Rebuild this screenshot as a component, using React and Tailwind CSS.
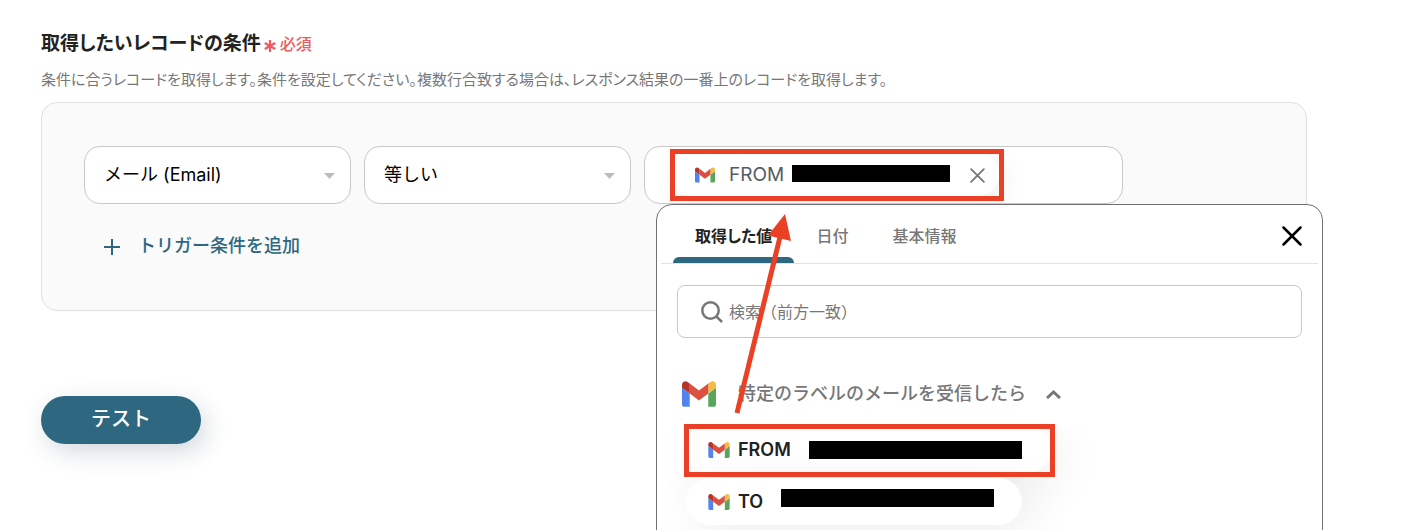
import React, { useState } from 'react'

const fields = ['メール (Email)', '名前 (Name)', '電話番号 (Tel)']
const operators = ['等しい', '等しくない', '含む']
const tabs = ['取得した値', '日付', '基本情報']

function GmailLogo({ className }) {
  return (
    <svg className={className} viewBox="52 42 88 66" aria-hidden="true">
      <path fill="#5383ec" d="M58 108h14V74L52 59v43c0 3.32 2.69 6 6 6" />
      <path fill="#58a65c" d="M120 108h14c3.32 0 6-2.69 6-6V59l-20 15" />
      <path fill="#f2bd42" d="M120 48v26l20-15v-8c0-7.42-8.47-11.65-14.4-7.2" />
      <path fill="#d95140" d="M72 74V48l24 18 24-18v26L96 92" />
      <path fill="#b63327" d="M52 51v8l20 15V48l-5.6-4.2c-5.94-4.45-14.4-.22-14.4 7.2" />
    </svg>
  )
}

function Cross({ className, width }) {
  return (
    <svg className={className} viewBox="0 0 20 20" fill="none" stroke="currentColor" strokeWidth={width} strokeLinecap="round" aria-hidden="true">
      <path d="M1.5 1.5l17 17M18.5 1.5l-17 17" />
    </svg>
  )
}

function Dropdown({ label, options }) {
  const [value, setValue] = useState(options[0])
  return (
    <div className="relative w-[267px] shrink-0">
      <select
        aria-label={label}
        value={value}
        onChange={e => setValue(e.target.value)}
        className="h-[58px] w-full appearance-none rounded-2xl border border-[#c8c8c8] bg-white px-[19px] pb-[2px] text-[18px] text-black"
      >
        {options.map(o => <option key={o}>{o}</option>)}
      </select>
      <svg className="pointer-events-none absolute right-4 top-[27px] h-[6px] w-[11px]" viewBox="0 0 11 6" aria-hidden="true">
        <path fill="#bdbdbd" d="M0 0h11L5.500 6z" />
      </svg>
    </div>
  )
}

export default function App() {
  const [tab, setTab] = useState(tabs[0])
  const [search, setSearch] = useState('')

  return (
    <div className="h-screen overflow-hidden bg-white pl-[41px] pr-[95px] pt-8 font-['Inter','Noto_Sans_CJK_JP',sans-serif] text-[#222]">
      <div className="flex h-6 items-center gap-[3px]">
        <h1 className="text-[19px] font-bold [font-feature-settings:'palt']">取得したいレコードの条件</h1>
        <span className="flex items-center gap-1 text-[16px] font-medium text-[#ee5a62]">
          <svg className="mt-1 h-3 w-3" viewBox="0 0 12 12" stroke="currentColor" strokeWidth="2.200" aria-hidden="true">
            <path d="M6 0v12M.8 3l10.400 6M11.200 3L.8 9" />
          </svg>
          必須
        </span>
      </div>
      <p className="mt-3 h-6 text-[15px] leading-6 text-[#777] [font-feature-settings:'palt']">
        条件に合うレコードを取得します。条件を設定してください。複数行合致する場合は、レスポンス結果の一番上のレコードを取得します。
      </p>

      <section className="mt-[10px] rounded-2xl border border-[#dfe0e4] bg-[#fafafa] px-[42px] pb-[50px] pt-[43px]">
        <div className="flex gap-[13px]">
          <Dropdown label="項目" options={fields} />
          <Dropdown label="条件" options={operators} />

          <div className="relative w-[479px] shrink-0">
            <div className="h-[58px] overflow-hidden rounded-2xl border border-[#c8c8c8] bg-white pl-[27px] pt-[7px]">
              <div className="flex h-[42px] w-[327px] items-center rounded-full bg-white pl-[23px] pr-[14px] shadow-[6px_6px_30px_rgba(0,0,0,0.07)]">
                <GmailLogo className="h-4 w-[20px]" />
                <span className="ml-[14px] text-[19px] text-[#555a64]">FROM</span>
                <span className="mb-1 ml-auto h-[17px] w-[158px] bg-black" />
                <button type="button" aria-label="削除" className="ml-5 text-[#777]">
                  <Cross className="h-[15px] w-[15px]" width="2.400" />
                </button>
              </div>
            </div>
            <div className="pointer-events-none absolute left-[26px] top-[3px] h-[52px] w-[334px] border-5 border-[#ea4025]" />

            <div className="absolute left-3 top-[58px] h-[400px] w-[667px] rounded-2xl border border-[#707070] bg-white">
              <div className="mx-1 flex h-[59px] border-b border-[#e2e2e2] pl-3 pr-4">
                {tabs.map(t => (
                  <button
                    key={t}
                    type="button"
                    onClick={() => setTab(t)}
                    className={`relative px-[22px] pt-1 text-[16px] [font-feature-settings:'palt'] ${t === tab ? 'font-bold text-[#222]' : 'font-medium text-[#777]'}`}
                  >
                    <span className="block h-[54px] leading-[54px]">{t}</span>
                    {t === tab && <span className="absolute inset-x-0 bottom-0 h-[6px] rounded-t-md bg-[#2e6880]" />}
                  </button>
                ))}
                <button type="button" aria-label="閉じる" className="ml-auto pt-1 text-black">
                  <Cross className="h-5 w-5" width="2.500" />
                </button>
              </div>

              <div className="mx-5 mt-[21px] flex h-[53px] items-center rounded-lg border border-[#c8c8c8] pl-[23px]">
                <svg className="h-[22px] w-[22px]" viewBox="0 0 22 22" fill="none" stroke="#777" strokeWidth="2.500" aria-hidden="true">
                  <circle cx="9.500" cy="9.500" r="8.200" />
                  <path d="M15.300 15.300L21 21" />
                </svg>
                <input
                  type="text"
                  aria-label="検索"
                  value={search}
                  onChange={e => setSearch(e.target.value)}
                  placeholder="検索（前方一致）"
                  className="ml-[6px] h-12 grow bg-transparent text-[16px] outline-none placeholder:text-[#777]"
                />
              </div>

              <div className="relative pt-10">
                <button type="button" className="ml-[25px] flex h-8 items-center text-[18px] font-medium text-[#777]">
                  <GmailLogo className="h-[26px] w-[34px]" />
                  <span className="mb-[2px] ml-[22px]">特定のラベルのメールを受信したら</span>
                  <svg className="ml-5 h-[9px] w-[15px]" viewBox="0 0 15 9" fill="none" stroke="currentColor" strokeWidth="3" aria-hidden="true">
                    <path d="M1 8l6.500-6L14 8" />
                  </svg>
                </button>
                <ul className="mt-4 flex flex-col items-start gap-[5px] overflow-hidden pb-10 pl-[29px] text-[18px] font-semibold">
                  <li>
                    <button type="button" className="flex h-[47px] w-[365px] items-center rounded-full bg-white pl-[22px] shadow-[10px_10px_50px_rgba(0,0,0,0.08)]">
                      <GmailLogo className="h-4 w-[22px]" />
                      <span className="ml-2">FROM</span>
                      <span className="ml-auto mr-[29px] h-[18px] w-[213px] bg-black" />
                    </button>
                  </li>
                  <li>
                    <button type="button" className="flex h-[47px] w-[336px] items-center rounded-full bg-white pl-[22px] shadow-[10px_10px_50px_rgba(0,0,0,0.08)]">
                      <GmailLogo className="h-4 w-[22px]" />
                      <span className="ml-2">TO</span>
                      <span className="mb-2 ml-auto mr-7 h-[18px] w-[213px] bg-black" />
                    </button>
                  </li>
                </ul>
                <div className="pointer-events-none absolute left-[27px] top-[86px] h-[53px] w-[371px] border-5 border-[#ea4025]" />
              </div>

              <svg className="pointer-events-none absolute left-[73px] top-[9px] h-[202px] w-[66px]" viewBox="730 214 66 202" aria-hidden="true">
                <path d="M737 413L780 237" stroke="#ea4025" strokeWidth="5" />
                <path d="M785 214L768 235.500L791 241z" fill="#ea4025" />
              </svg>
            </div>
          </div>
        </div>

        <button type="button" className="ml-5 mt-7 flex h-7 items-center text-[18px] font-medium text-[#2e6880]">
          <svg className="mt-[2px] h-4 w-4" viewBox="0 0 16 16" stroke="currentColor" strokeWidth="2" aria-hidden="true">
            <path d="M8 0v16M0 8h16" />
          </svg>
          <span className="mb-[2px] ml-[18px]">トリガー条件を追加</span>
        </button>
      </section>

      <button type="button" className="mt-[85px] h-12 w-40 rounded-full bg-[#2e6880] pb-[2px] text-[20px] font-medium text-white shadow-[5px_8px_24px_rgba(46,70,90,0.2)]">
        テスト
      </button>
    </div>
  )
}
